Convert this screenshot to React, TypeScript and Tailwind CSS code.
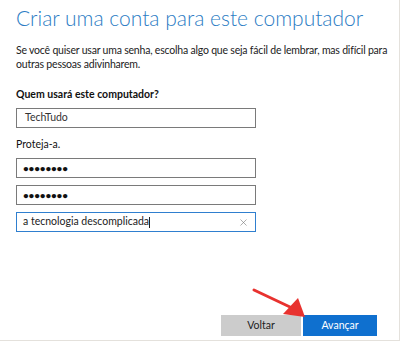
import { X } from "lucide-react"

export default function App() {
    return (
        <div
            className="relative w-[400px] h-[341px] bg-white border-r border-b border-[#e4e1dc] flex flex-col pl-4 overflow-hidden"
            style={{ fontFamily: 'Lato, "Liberation Sans", sans-serif' }}
        >
            <h1 className="mt-[3px] text-[21px] font-light leading-[30px] text-[#2b7cc4] whitespace-nowrap">
                Criar uma conta para este computador
            </h1>

            <p className="mt-[10px] text-[10.5px] leading-[14px] text-[#222] whitespace-nowrap tracking-[-0.2px]">
                Se você quiser usar uma senha, escolha algo que seja fácil de lembrar, mas difícil para
                <br />
                outras pessoas adivinharem.
            </p>

            <label className="mt-[16px] text-[10.5px] font-bold leading-[14px] text-[#111]">
                Quem usará este computador?
            </label>
            <div className="mt-[7px] w-[240px] h-[20px] border border-[#7a7a7a] flex items-center pl-[8px] text-[10.5px] text-[#333]">
                TechTudo
            </div>

            <label className="mt-[9px] text-[10.5px] leading-[14px] text-[#111]">
                Proteja-a.
            </label>
            <div className="mt-[7px] w-[240px] h-[20px] border border-[#7a7a7a] flex items-center pl-[6px] text-[10px] font-bold tracking-[-0.2px] text-[#111]">
                ••••••••
            </div>
            <div className="mt-[7px] w-[240px] h-[20px] border border-[#7a7a7a] flex items-center pl-[6px] text-[10px] font-bold tracking-[-0.2px] text-[#111]">
                ••••••••
            </div>
            <div className="mt-[7px] w-[240px] h-[20px] border border-[#2f7fcf] flex items-center justify-between pl-[6px] pr-[6px] text-[10.5px] text-[#222]">
                <span>
                    a tecnologia descomplicada<span className="inline-block w-px h-[11px] bg-[#222] align-middle" />
                </span>
                <X size={11} strokeWidth={1.3} className="text-[#777]" />
            </div>

            <div className="mt-auto mb-[4px] flex justify-end gap-[2px] pr-[22px]">
                <button className="w-[80px] h-[21px] bg-[#cccccc] text-[10.5px] text-[#222]">
                    Voltar
                </button>
                <button className="w-[74px] h-[21px] bg-[#0f70cf] text-[10.5px] text-white">
                    Avançar
                </button>
            </div>

            <svg className="absolute left-0 top-0" width="400" height="341" viewBox="0 0 400 341">
                <line x1="254" y1="290" x2="290" y2="307" stroke="#e8322f" strokeWidth="3" strokeLinecap="round" />
                <polygon points="305,317 283,314 298,298" fill="#e8322f" />
            </svg>
        </div>
    )
}
